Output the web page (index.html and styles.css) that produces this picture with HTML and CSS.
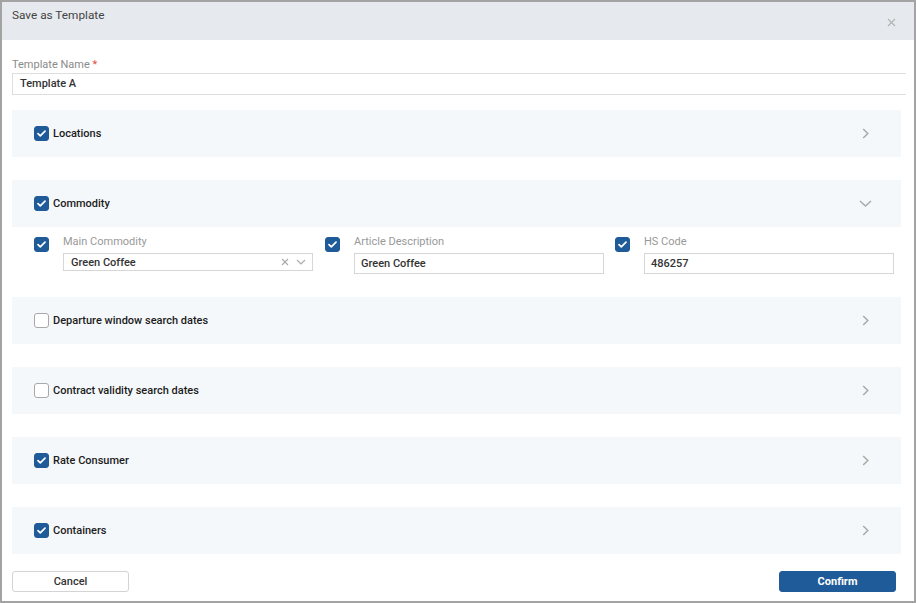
FILE: index.html
```html
<!DOCTYPE html>
<html>
<head>
<meta charset="utf-8">
<link rel="stylesheet" href="styles.css">
</head>
<body>
<div class="dialog">
  <div class="dlg-header">
    <div class="dlg-title">Save as Template</div>
    <svg class="close" width="9" height="9" viewBox="0 0 9 9"><path d="M1 1L8 8M8 1L1 8" stroke="#b3b3b3" stroke-width="1.2" fill="none"/></svg>
  </div>
  <div class="dlg-body">
    <div class="name-label">Template Name <span class="req">*</span></div>
    <div class="name-input">Template A</div>

    <div class="section first">
      <div class="panel">
        <span class="cb on"><svg width="9" height="7" viewBox="0 0 9 7"><path d="M1 3.6L3.3 5.8L8 1.2" stroke="#fff" stroke-width="1.7" fill="none" stroke-linecap="round" stroke-linejoin="round"/></svg></span>
        <span class="panel-title">Locations</span>
        <svg class="chev" width="7" height="11" viewBox="0 0 7 11"><path d="M1.2 1L5.8 5.5L1.2 10" stroke="#a9a9a9" stroke-width="1.5" fill="none"/></svg>
      </div>
    </div>

    <div class="section">
      <div class="panel">
        <span class="cb on"><svg width="9" height="7" viewBox="0 0 9 7"><path d="M1 3.6L3.3 5.8L8 1.2" stroke="#fff" stroke-width="1.7" fill="none" stroke-linecap="round" stroke-linejoin="round"/></svg></span>
        <span class="panel-title">Commodity</span>
        <svg class="chev down" width="13" height="7" viewBox="0 0 13 7"><path d="M1 1L6.5 6L12 1" stroke="#a9a9a9" stroke-width="1.5" fill="none"/></svg>
      </div>
      <div class="fields">
        <div class="field">
          <span class="cb on"><svg width="9" height="7" viewBox="0 0 9 7"><path d="M1 3.6L3.3 5.8L8 1.2" stroke="#fff" stroke-width="1.7" fill="none" stroke-linecap="round" stroke-linejoin="round"/></svg></span>
          <div class="field-main">
            <div class="field-label">Main Commodity</div>
            <div class="select">
              <span class="val">Green Coffee</span>
              <svg class="sel-x" width="8" height="8" viewBox="0 0 8 8"><path d="M1 1L7 7M7 1L1 7" stroke="#a9a9a9" stroke-width="1.1" fill="none"/></svg>
              <svg class="sel-chev" width="10" height="6" viewBox="0 0 10 6"><path d="M1 1L5 5L9 1" stroke="#a9a9a9" stroke-width="1.1" fill="none"/></svg>
            </div>
          </div>
        </div>
        <div class="field">
          <span class="cb on"><svg width="9" height="7" viewBox="0 0 9 7"><path d="M1 3.6L3.3 5.8L8 1.2" stroke="#fff" stroke-width="1.7" fill="none" stroke-linecap="round" stroke-linejoin="round"/></svg></span>
          <div class="field-main">
            <div class="field-label">Article Description</div>
            <div class="input">Green Coffee</div>
          </div>
        </div>
        <div class="field">
          <span class="cb on"><svg width="9" height="7" viewBox="0 0 9 7"><path d="M1 3.6L3.3 5.8L8 1.2" stroke="#fff" stroke-width="1.7" fill="none" stroke-linecap="round" stroke-linejoin="round"/></svg></span>
          <div class="field-main">
            <div class="field-label">HS Code</div>
            <div class="input">486257</div>
          </div>
        </div>
      </div>
    </div>

    <div class="section">
      <div class="panel">
        <span class="cb"></span>
        <span class="panel-title">Departure window search dates</span>
        <svg class="chev" width="7" height="11" viewBox="0 0 7 11"><path d="M1.2 1L5.8 5.5L1.2 10" stroke="#a9a9a9" stroke-width="1.5" fill="none"/></svg>
      </div>
    </div>

    <div class="section">
      <div class="panel">
        <span class="cb"></span>
        <span class="panel-title">Contract validity search dates</span>
        <svg class="chev" width="7" height="11" viewBox="0 0 7 11"><path d="M1.2 1L5.8 5.5L1.2 10" stroke="#a9a9a9" stroke-width="1.5" fill="none"/></svg>
      </div>
    </div>

    <div class="section">
      <div class="panel">
        <span class="cb on"><svg width="9" height="7" viewBox="0 0 9 7"><path d="M1 3.6L3.3 5.8L8 1.2" stroke="#fff" stroke-width="1.7" fill="none" stroke-linecap="round" stroke-linejoin="round"/></svg></span>
        <span class="panel-title">Rate Consumer</span>
        <svg class="chev" width="7" height="11" viewBox="0 0 7 11"><path d="M1.2 1L5.8 5.5L1.2 10" stroke="#a9a9a9" stroke-width="1.5" fill="none"/></svg>
      </div>
    </div>

    <div class="section last">
      <div class="panel">
        <span class="cb on"><svg width="9" height="7" viewBox="0 0 9 7"><path d="M1 3.6L3.3 5.8L8 1.2" stroke="#fff" stroke-width="1.7" fill="none" stroke-linecap="round" stroke-linejoin="round"/></svg></span>
        <span class="panel-title">Containers</span>
        <svg class="chev" width="7" height="11" viewBox="0 0 7 11"><path d="M1.2 1L5.8 5.5L1.2 10" stroke="#a9a9a9" stroke-width="1.5" fill="none"/></svg>
      </div>
    </div>
  </div>
  <div class="dlg-footer">
    <button class="btn cancel">Cancel</button>
    <button class="btn confirm">Confirm</button>
  </div>
</div>
</body>
</html>
```
FILE: styles.css
```css
* { box-sizing: border-box; }
html, body { margin: 0; padding: 0; background: #fff; }
body { font-family: Roboto, "Liberation Sans", Arial, sans-serif; font-size: 11px; color: #222; }

.dialog {
  width: 916px;
  height: 603px;
  border: 2px solid #a3a3a3;
  display: flex;
  flex-direction: column;
  background: #fff;
}

.dlg-header {
  height: 38px;
  background: #e6e9ed;
  display: flex;
  align-items: center;
  justify-content: space-between;
  padding: 0 18px 0 10px;
}
.dlg-title {
  align-self: flex-start;
  margin-top: 6px;
  font-size: 11.8px;
  line-height: 14px;
  color: #444;
}
.close { margin-top: 2px; }

.dlg-body {
  padding: 18px 8px 0 10px;
  flex: 1;
}
.name-label {
  line-height: 14px;
  color: #8a8a8a;
}
.req { color: #e14b4b; }
.name-input {
  margin-top: 1px;
  height: 22px;
  border: 1px solid #dedede;
  border-right: none;
  padding-left: 7px;
  line-height: 20px;
  font-weight: 500;
  color: #333;
}

.section { margin: 0 5px 23px 0; }
.section.first { margin-top: 15px; }
.section.last { margin-bottom: 0; }

.panel {
  height: 47px;
  background: #f5f8fa;
  display: flex;
  align-items: center;
  padding: 0 32px 0 22px;
}
.panel-title {
  margin-left: 4px;
  font-weight: 500;
  color: #1c1c1c;
  flex: 1;
}
.chev.down { margin-right: -3px; }

.cb {
  width: 15px;
  height: 15px;
  border-radius: 3px;
  border: 1px solid #a8a8a8;
  background: #fff;
  display: inline-flex;
  align-items: center;
  justify-content: center;
  flex: none;
}
.cb.on {
  background: #1f5b98;
  border-color: #1f5b98;
}

.fields {
  display: grid;
  grid-template-columns: 291px 290px 290px;
  padding: 8px 0 0 22px;
}
.field {
  display: flex;
  align-items: flex-start;
}
.field .cb { margin-top: 2px; margin-right: 14px; }
.field-main { width: 250px; }
.field-label {
  line-height: 14px;
  color: #999;
  margin-bottom: 4px;
}
.select {
  height: 18px;
  border: 1px solid #d6d6d6;
  display: flex;
  align-items: center;
  padding: 0 6px 0 7px;
}
.select .val { flex: 1; font-weight: 500; color: #333; }
.sel-x { margin-right: 7px; }
.input {
  height: 21px;
  border: 1px solid #d6d6d6;
  padding-left: 6px;
  line-height: 19px;
  font-weight: 500;
  color: #333;
}

.dlg-footer {
  display: flex;
  justify-content: space-between;
  padding: 0 18px 9px 10px;
}
.btn {
  width: 117px;
  height: 21px;
  border-radius: 3px;
  font-family: Roboto, "Liberation Sans", Arial, sans-serif;
  font-size: 11px;
  padding: 0;
}
.cancel {
  background: #fff;
  border: 1px solid #d3d3d3;
  color: #333;
  font-weight: 500;
}
.confirm {
  background: #1f5b98;
  border: 1px solid #1f5b98;
  color: #fff;
  font-weight: 700;
}
```
